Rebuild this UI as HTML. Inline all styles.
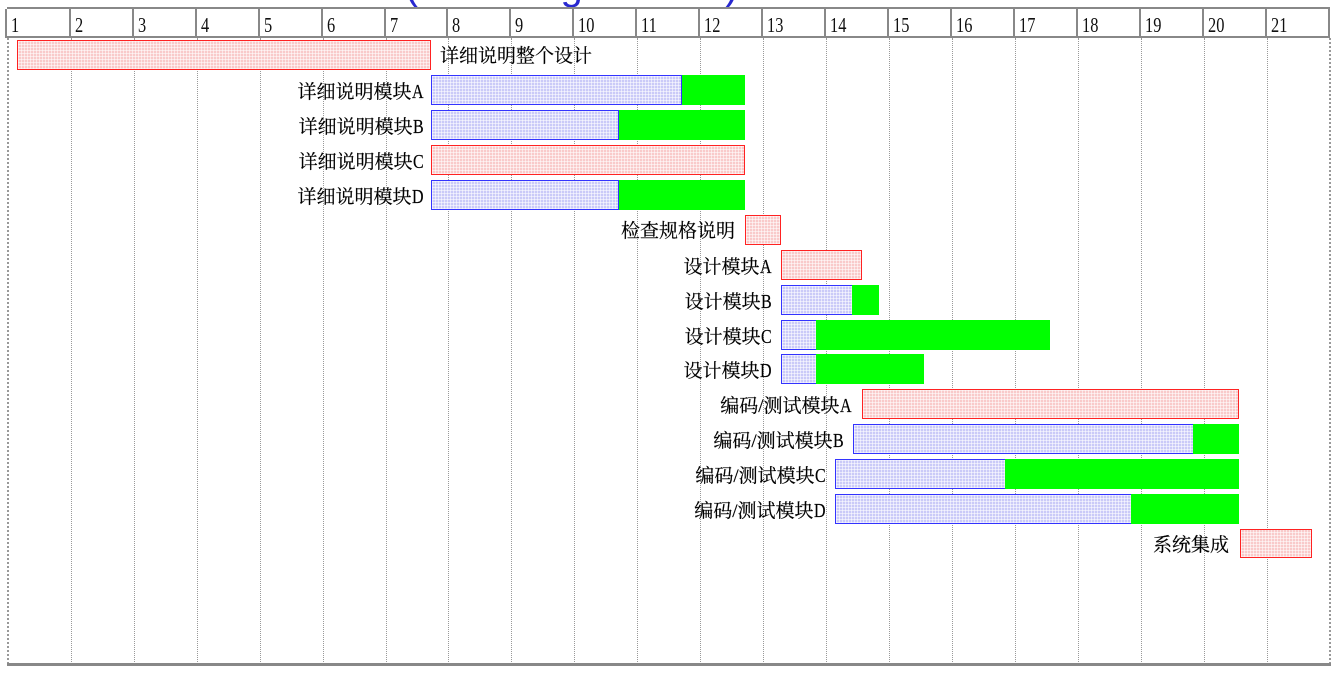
<!DOCTYPE html>
<html><head><meta charset="utf-8"><style>
html,body{margin:0;padding:0;background:#fff;width:1343px;height:674px;overflow:hidden;position:relative}
*{box-sizing:border-box}
.f{font-family:"Liberation Serif","Noto Serif CJK SC",serif;font-size:19px;color:#000;position:absolute;white-space:nowrap;line-height:30px;-webkit-text-stroke:0.2px #000}
.f i{font-style:normal;display:inline-block;transform:scaleX(0.8);transform-origin:left center;margin-right:-3px;font-size:20px}
.hdr{position:absolute;top:7px;left:7px;width:1323px;height:31px;border-top:2px solid #888;border-bottom:2px solid #888}
.hc{position:absolute;top:0;height:29px;border-left:2px solid #888;font-family:"Liberation Serif",serif;font-size:21px;line-height:32px;padding-left:4px;color:#111}
.hc span{display:inline-block;transform:scaleX(0.78);transform-origin:left center}
.g{position:absolute;top:38px;height:626px;width:0;border-left:1px dotted #999}
.b{position:absolute;height:30px}
.r{border:1px solid #f22;background-color:#f9caca;background-image:repeating-linear-gradient(90deg,rgba(255,255,255,.55) 0 1px,transparent 1px 3px),repeating-linear-gradient(0deg,rgba(255,255,255,.55) 0 1px,transparent 1px 3px)}
.u{border:1px solid #33f;background-color:#cacaf8;background-image:repeating-linear-gradient(90deg,rgba(255,255,255,.55) 0 1px,transparent 1px 3px),repeating-linear-gradient(0deg,rgba(255,255,255,.55) 0 1px,transparent 1px 3px)}
.gr{background:#00ff00}
</style></head><body>
<div style="position:absolute;left:405px;top:-36px;font-family:'Liberation Sans',sans-serif;font-size:40px;color:#2828d0;letter-spacing:40px">(&nbsp;&nbsp;g&nbsp;&nbsp;)</div>
<div class="hdr">
<div class="hc" style="left:-2px;width:64px"><span>1</span></div>
<div class="hc" style="left:62px;width:63px"><span>2</span></div>
<div class="hc" style="left:125px;width:63px"><span>3</span></div>
<div class="hc" style="left:188px;width:63px"><span>4</span></div>
<div class="hc" style="left:251px;width:63px"><span>5</span></div>
<div class="hc" style="left:314px;width:63px"><span>6</span></div>
<div class="hc" style="left:377px;width:63px"><span>7</span></div>
<div class="hc" style="left:439px;width:63px"><span>8</span></div>
<div class="hc" style="left:502px;width:63px"><span>9</span></div>
<div class="hc" style="left:565px;width:63px"><span>10</span></div>
<div class="hc" style="left:628px;width:63px"><span>11</span></div>
<div class="hc" style="left:691px;width:63px"><span>12</span></div>
<div class="hc" style="left:754px;width:63px"><span>13</span></div>
<div class="hc" style="left:817px;width:63px"><span>14</span></div>
<div class="hc" style="left:880px;width:63px"><span>15</span></div>
<div class="hc" style="left:943px;width:63px"><span>16</span></div>
<div class="hc" style="left:1006px;width:63px"><span>17</span></div>
<div class="hc" style="left:1069px;width:63px"><span>18</span></div>
<div class="hc" style="left:1132px;width:63px"><span>19</span></div>
<div class="hc" style="left:1195px;width:63px"><span>20</span></div>
<div class="hc" style="left:1258px;width:63px"><span>21</span></div>
<div class="hc" style="left:1321px;width:2px;padding:0"></div>
</div>
<div class="g" style="left:7px;border-left:2px dotted #999"></div>
<div class="g" style="left:71px"></div><div class="g" style="left:134px"></div><div class="g" style="left:197px"></div><div class="g" style="left:260px"></div><div class="g" style="left:323px"></div><div class="g" style="left:386px"></div><div class="g" style="left:448px"></div><div class="g" style="left:511px"></div><div class="g" style="left:574px"></div><div class="g" style="left:637px"></div><div class="g" style="left:700px"></div><div class="g" style="left:763px"></div><div class="g" style="left:826px"></div><div class="g" style="left:889px"></div><div class="g" style="left:952px"></div><div class="g" style="left:1015px"></div><div class="g" style="left:1078px"></div><div class="g" style="left:1141px"></div><div class="g" style="left:1204px"></div><div class="g" style="left:1267px"></div>
<div class="g" style="left:1329px;border-left:2px dotted #999"></div>
<div style="position:absolute;left:7px;top:663px;width:1324px;height:3px;background:#888"></div>

<div class="b r" style="left:17px;top:40px;width:414px"></div>
<div class="f" style="left:440px;top:42px">详细说明整个设计</div>
<div class="b u" style="left:431px;top:75px;width:251px"></div><div class="b gr" style="left:682px;top:75px;width:63px"></div>
<div class="f" style="right:920px;top:77px">详细说明模块<i>A</i></div>
<div class="b u" style="left:431px;top:110px;width:188px"></div><div class="b gr" style="left:619px;top:110px;width:126px"></div>
<div class="f" style="right:920px;top:112px">详细说明模块<i>B</i></div>
<div class="b r" style="left:431px;top:145px;width:314px"></div>
<div class="f" style="right:920px;top:147px">详细说明模块<i>C</i></div>
<div class="b u" style="left:431px;top:180px;width:188px"></div><div class="b gr" style="left:619px;top:180px;width:126px"></div>
<div class="f" style="right:920px;top:182px">详细说明模块<i>D</i></div>
<div class="b r" style="left:745px;top:215px;width:36px"></div>
<div class="f" style="right:608px;top:217px">检查规格说明</div>
<div class="b r" style="left:781px;top:250px;width:81px"></div>
<div class="f" style="right:572px;top:252px">设计模块<i>A</i></div>
<div class="b u" style="left:781px;top:285px;width:72px"></div><div class="b gr" style="left:852px;top:285px;width:27px"></div>
<div class="f" style="right:572px;top:287px">设计模块<i>B</i></div>
<div class="b u" style="left:781px;top:320px;width:36px"></div><div class="b gr" style="left:816px;top:320px;width:234px"></div>
<div class="f" style="right:572px;top:322px">设计模块<i>C</i></div>
<div class="b u" style="left:781px;top:354px;width:36px"></div><div class="b gr" style="left:816px;top:354px;width:108px"></div>
<div class="f" style="right:572px;top:356px">设计模块<i>D</i></div>
<div class="b r" style="left:862px;top:389px;width:377px"></div>
<div class="f" style="right:492px;top:391px">编码/测试模块<i>A</i></div>
<div class="b u" style="left:853px;top:424px;width:341px"></div><div class="b gr" style="left:1193px;top:424px;width:46px"></div>
<div class="f" style="right:500px;top:426px">编码/测试模块<i>B</i></div>
<div class="b u" style="left:835px;top:459px;width:171px"></div><div class="b gr" style="left:1005px;top:459px;width:234px"></div>
<div class="f" style="right:518px;top:461px">编码/测试模块<i>C</i></div>
<div class="b u" style="left:835px;top:494px;width:297px"></div><div class="b gr" style="left:1131px;top:494px;width:108px"></div>
<div class="f" style="right:518px;top:496px">编码/测试模块<i>D</i></div>
<div class="b r" style="left:1240px;top:529px;width:72px;height:29px"></div>
<div class="f" style="right:114px;top:531px">系统集成</div>
</body></html>
